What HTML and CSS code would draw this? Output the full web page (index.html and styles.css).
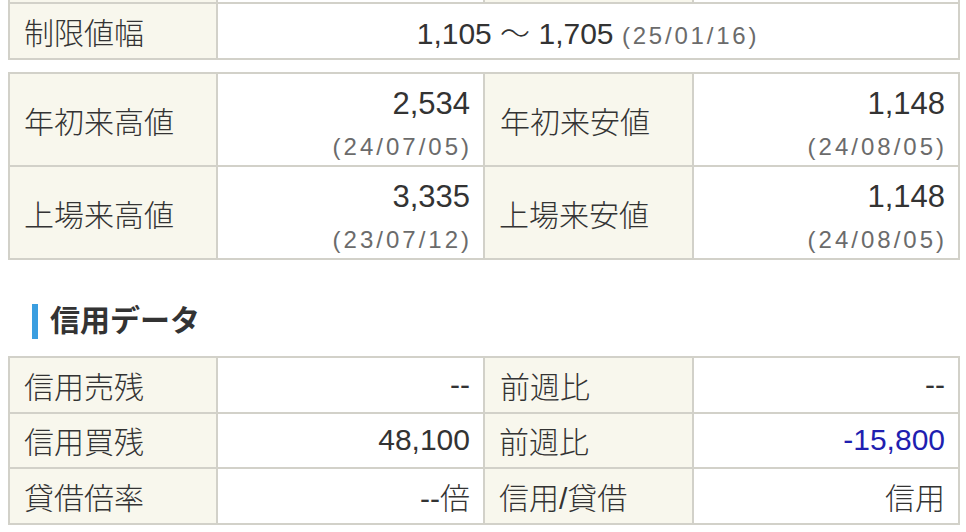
FILE: index.html
```html
<!DOCTYPE html>
<html lang="ja">
<head>
<meta charset="utf-8">
<title>株価データ</title>
<link rel="stylesheet" href="styles.css">
</head>
<body>
<div class="page">
  <table class="grid grid-top">
    <tr class="row-prev">
      <th class="c1"></th>
      <td class="c2"></td>
      <th class="c3"></th>
      <td class="c4"></td>
    </tr>
    <tr class="row-limit">
      <th>制限値幅</th>
      <td colspan="3" class="center"><span class="num">1,105 〜 1,705</span> <span class="date">(25/01/16)</span></td>
    </tr>
  </table>

  <table class="grid grid-range">
    <tr>
      <th class="c1">年初来高値</th>
      <td class="c2"><span class="num-line">2,534</span><span class="date-line">(24/07/05)</span></td>
      <th class="c3">年初来安値</th>
      <td class="c4"><span class="num-line">1,148</span><span class="date-line">(24/08/05)</span></td>
    </tr>
    <tr>
      <th>上場来高値</th>
      <td><span class="num-line">3,335</span><span class="date-line">(23/07/12)</span></td>
      <th>上場来安値</th>
      <td><span class="num-line">1,148</span><span class="date-line">(24/08/05)</span></td>
    </tr>
  </table>

  <h2 class="section-title"><span class="bar"></span>信用データ</h2>

  <table class="grid grid-credit">
    <tr>
      <th class="c1">信用売残</th>
      <td class="c2">--</td>
      <th class="c3">前週比</th>
      <td class="c4">--</td>
    </tr>
    <tr>
      <th>信用買残</th>
      <td>48,100</td>
      <th>前週比</th>
      <td class="minus">-15,800</td>
    </tr>
    <tr>
      <th>貸借倍率</th>
      <td>--倍</td>
      <th>信用/貸借</th>
      <td>信用</td>
    </tr>
  </table>
</div>
</body>
</html>
```

FILE: styles.css
```css
html, body {
  margin: 0;
  padding: 0;
  background: #ffffff;
}

body {
  font-family: "Liberation Sans", "Noto Sans CJK JP", sans-serif;
  color: #333333;
  overflow: hidden;
}

.page {
  width: 952px;
  padding-left: 8px;
}

.grid {
  width: 952px;
  table-layout: fixed;
  border-collapse: separate;
  border-spacing: 0;
  border-top: 2px solid #d2d1c9;
  border-left: 2px solid #d2d1c9;
}

.grid th,
.grid td {
  box-sizing: border-box;
  border-right: 2px solid #d2d1c9;
  border-bottom: 2px solid #d2d1c9;
  padding: 0;
  vertical-align: middle;
}

.grid th {
  background: #f8f7ed;
  text-align: left;
  font-weight: 300;
  font-size: 30px;
  padding-left: 14px;
  white-space: nowrap;
}

.grid .c3 {
  padding-left: 15px;
}

.grid td {
  background: #ffffff;
  text-align: right;
  font-weight: 300;
  font-size: 30px;
  padding-right: 13px;
}

.c1 { width: 208px; }
.c2 { width: 267px; }
.c3 { width: 209px; }
.c4 { width: 266px; }

.grid-top {
  margin-top: -54px;
}

.row-prev th,
.row-prev td {
  height: 56px;
}

.row-limit th,
.row-limit td {
  height: 56px;
}

.grid td.center {
  text-align: center;
  padding-right: 0;
}

.num {
  font-size: 30px;
}

.date {
  font-size: 24px;
  letter-spacing: 2.8px;
  color: #6b6b6b;
}

.grid-range {
  margin-top: 12px;
}

.grid-range th,
.grid-range td {
  height: 93px;
}

.grid-range td {
  vertical-align: top;
  padding-top: 10px;
}

.num-line {
  display: block;
  font-size: 31px;
  line-height: 40px;
}

.date-line {
  display: block;
  font-size: 24px;
  line-height: 34px;
  padding-top: 6px;
  letter-spacing: 3px;
  margin-right: -2px;
  color: #6b6b6b;
}

.section-title {
  display: flex;
  align-items: center;
  gap: 12px;
  margin: 43px 0 17px 0;
  padding-left: 24px;
  height: 36px;
  font-size: 30px;
  font-weight: bold;
  color: #333333;
  line-height: 36px;
}

.section-title .bar {
  display: block;
  width: 6px;
  height: 35px;
  background: #3a9ee0;
}

.grid-credit th,
.grid-credit td {
  height: 55.5px;
}

.grid-credit td.minus {
  color: #1f1fb0;
}
```
